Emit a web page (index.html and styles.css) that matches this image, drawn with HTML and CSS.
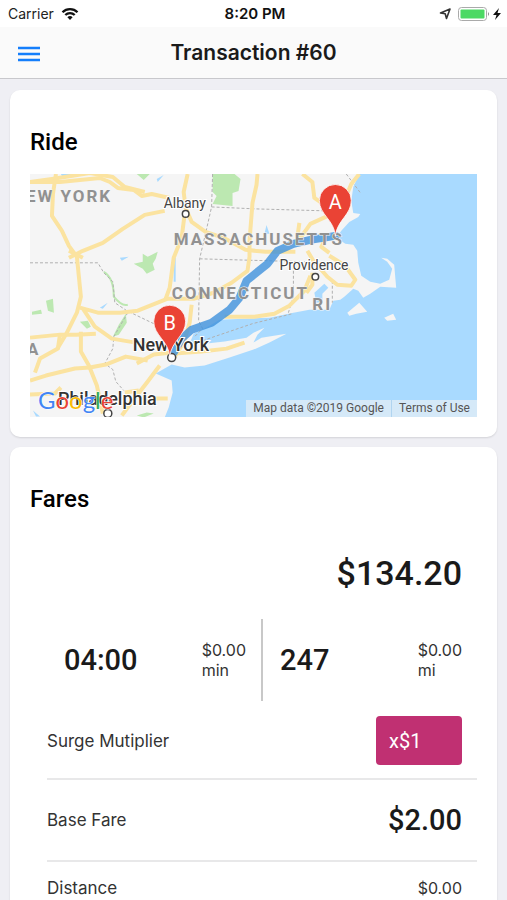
FILE: index.html
```
<!DOCTYPE html>
<html lang="en">
<head>
    <meta charset="UTF-8">
    <meta name="viewport" content="width=device-width, initial-scale=1.0">
    <title>Transaction #60</title>
    <link rel="stylesheet" href="styles.css">
</head>
<body>

<div class="status-bar">
    <div class="status-left">
        <span>Carrier</span>
        <svg width="18" height="14" viewBox="0 0 18 14">
            <path d="M1.500 5.200a10.500 10.500 0 0 1 15 0M4.300 8a6.600 6.600 0 0 1 9.400 0" fill="none" stroke="#111" stroke-width="2.300"/>
            <path d="M9 13L6.400 10.300a3.700 3.700 0 0 1 5.200 0z" fill="#111"/>
        </svg>
    </div>
    <div class="status-time">8:20 PM</div>
    <div class="status-right">
        <svg width="63" height="16" viewBox="0 0 63 16">
            <path d="M1.500 7L11 3 7.500 12.500 6.200 7.800z" fill="none" stroke="#333" stroke-width="1.600" stroke-linejoin="round"/>
            <rect x="19.500" y="1.500" width="28" height="13" rx="3" fill="#fff" stroke="#aaa"/>
            <rect x="21.500" y="3.500" width="24" height="9" rx="1" fill="#4cd964"/>
            <path d="M49 6v4q2-2 0-4z" fill="#888"/>
            <path d="M60 2L54 9h3.500l-1.500 5L62 7h-3.500z" fill="#111"/>
        </svg>
    </div>
</div>

<header>
    <button class="menu-button" aria-label="Menu">
        <svg width="24" height="18" viewBox="0 0 24 18">
            <path d="M1 4h22M1 10h22M1 16h22" stroke="#147efb" stroke-width="2.400"/>
        </svg>
    </button>
    <h1>Transaction #60</h1>
</header>

<main>
    <section class="card">
        <h2>Ride</h2>
        <div class="map">
            <svg class="map-drawing" viewBox="30 173 448 244">
                <rect x="30" y="173" width="448" height="244" fill="#f5f5f5"/>

                <!-- parks -->
                <g fill="#bce8b1">
                    <path d="M213 173h22l6 5-2 12-6 2v13l-10-1-10-1 4-8-4-4z"/>
                    <path d="M137 173h13l-6 6zM134 263l9-2 0-8 5 3 10-5-2 7-3 5 2 6-8 4-4-5z"/>
                    <path d="M46 300l7-2 1 14-6-2zM32 311l9-2 1 4-10 1z"/>
                    <path d="M126 313l1 9-8 12-6 2 6-12zM137 415l10-3 7 1-10 4zM80 321l8-1 3 6-4 2z"/>
                </g>
                <path d="M104 271q10 6 10 25 8 10 14 8" fill="none" stroke="#bce8b1" stroke-width="2"/>

                <!-- water -->
                <g fill="#a9daff">
                    <path d="M360 173L354 186 352 200 354 212 361 213 359 216 350 221 342 230 337 237 346 243 354 244 358 250 359 262 362 275 371 281 381 283 390 279 393 268 388 261 382 257 388 258 395 264 397 287 381 286 371 293 364 297 359 290 354 288 345 296 341 299 334 300 330 309 310 309 294 312 270 317 220 319 210 325 194 333 190 343 207 343 225 341 247 337 254 332 265 327 258 334 254 342 262 337 287 333 270 342 254 349 230 357 205 365 185 367 172 364 156 373 172 380 173 392 169 407 165 417H478V173z"/>
                    <path d="M315 292l10-9 4 4-6 6v8l-6 1zM61 173h15l-4 2H62zM164 174l-6 7-1-3z"/>
                    <path d="M120 257l9-1-7 4zM100 307l8-5-5 6zM174 257h2v24h-2zM267 224l3 9h-5z"/>
                    <path d="M33 410l7 6-4 0z"/>
                </g>
                <path d="M348 312L360 302 368 311 357 313 350 315zM385 317l9-4 3 6-9 1z" fill="#f5f5f5"/>

                <!-- state borders -->
                <g fill="none" stroke="#b0b0b0" stroke-width="1" stroke-dasharray="3 2">
                    <path d="M213 173l-1 33-5 22-7 30-1 62 4 8-8 8M212 206l45 2 72 2M200 258l106 3M294 265v30l-5 17M30 262h68l6 10 9 9 2 21 12 8 27 13 14 6M128 312l-14 24-1 12-8 15 8 6 3 12 8 9M203 340l50-17 40-10M333 280v22M347 173l15 20"/>
                </g>

                <!-- highways -->
                <g class="roads">
                    <path d="M30 181l22-3 38-6 23 4 12 10 20 5"/>
                    <path d="M56 173l-3 20-1 22 10 15 7 15 8 11 4 40-4 16-10 20-9 15"/>
                    <path d="M30 181h30l40-4 10 4 8 6 16 2 8 6 10-2 18 4"/>
                    <path d="M188 173l-4 18 2 16 6 14 14 10 18 6 22 12 20 2h30"/>
                    <path d="M69 257l14-7 20-8 20-14 22-14 20-4M69 250l14 7"/>
                    <path d="M185 213l-3 24-8 20-4 30-4 11"/>
                    <path d="M168 298l-30 12-18 2h-22l-18-5M83 308l12 18 17 12 24 4 18 2M30 337l30-3h16l20-1"/>
                    <path d="M60 334l-2 14-18 10-5 14M30 380l16-5 29-7 15-1 16-3 20-8 22 4"/>
                    <path d="M81 331v20l8 14 8 20 6 28"/>
                    <path d="M168 298h26l20-6 18-10 16-12 2-14 0-16 3-38 4-18 1-11"/>
                    <path d="M192 304l-2 18-6 20-9 14"/>
                    <path d="M225 316l30 0 20-3 15-8 15-15 6-15"/>
                    <path d="M303 173l10 8 2 16 13 9M360 173l-8 10-6 14M333 213l-22 10-10 14M328 234l-6 12 8 6M300 222l-2 14"/>
                    <path d="M308 250l6 10 14 16 10 8 14 1 4-6-10-14-16-10M313 272v12l-6 8"/>
                    <path d="M175 353l27-2 25-3 18-6M137 363l17-9 18-2M160 365l-12 16-14 18-12 16M125 392l14-2"/>
                    <path d="M30 394l25-1 6-6M143 398h25"/>
                </g>

                <!-- route -->
                <path d="M174 352L182 338 192 329 212 322 230 309 240 297 247 280 268 263 278 250 294 243 311 239 336 235" fill="none" stroke="#3f91dc" stroke-opacity=".8" stroke-width="8" stroke-linejoin="round" stroke-linecap="round"/>

                <g class="state">
                    <text x="26" y="201">EW YORK</text>
                    <text x="174" y="244">MASSACHUSETTS</text>
                    <text x="172" y="298">CONNECTICUT</text>
                    <text x="313" y="309">RI</text>
                    <text x="27" y="354">A</text>
                </g>
                <g class="city">
                    <text x="164" y="207">Albany</text>
                    <text x="280" y="269">Providence</text>
                </g>
                <g class="city big">
                    <text x="133" y="350">New York</text>
                    <text x="58" y="405">Philadelphia</text>
                </g>
                <g fill="#fff" stroke="#444" stroke-width="1.500">
                    <circle cx="186" cy="213" r="3.300"/>
                    <circle cx="316" cy="276" r="3.300"/>
                    <circle cx="172" cy="357" r="4"/>
                    <circle cx="108" cy="413" r="4"/>
                </g>

                <!-- markers -->
                <g fill="#ea4335" stroke="#fff" stroke-width=".8">
                    <path d="M336 235C335 219 320 214 320 199.500a16 16 0 0 1 32 0C352 214 338 219 336 235z"/>
                    <path d="M170 356C169 340 154 335 154 320.500a16 16 0 0 1 32 0C186 335 172 340 170 356z"/>
                </g>
                <g class="pin">
                    <text x="336" y="208">A</text>
                    <text x="170" y="329">B</text>
                </g>

                <text class="logo" x="38" y="409"><tspan fill="#4285f4">G</tspan><tspan fill="#ea4335">o</tspan><tspan fill="#fbbc05">o</tspan><tspan fill="#4285f4">g</tspan><tspan fill="#34a853">l</tspan><tspan fill="#ea4335">e</tspan></text>
            </svg>
            <div class="map-legal">
                <span>Map data ©2019 Google</span>
                <a href="#">Terms of Use</a>
            </div>
        </div>
    </section>

    <section class="card">
        <h2>Fares</h2>
        <div class="total">$134.20</div>
        <div class="stats">
            <div class="stat">
                <span class="amount">04:00</span>
                <span class="rate">$0.00<br>min</span>
            </div>
            <div class="stat">
                <span class="amount">247</span>
                <span class="rate">$0.00<br>mi</span>
            </div>
        </div>
        <div class="fare-row surge-row">
            <span>Surge Mutiplier</span>
            <button class="surge">x$1</button>
        </div>
        <div class="fare-row">
            <span>Base Fare</span>
            <span class="amount">$2.00</span>
        </div>
        <div class="fare-row small">
            <span>Distance</span>
            <span class="rate">$0.00</span>
        </div>
    </section>
</main>

</body>
</html>
```
FILE: styles.css
```
* {
    box-sizing: border-box;
}
body {
    font-family: Inter, sans-serif;
    margin: 0;
    background-color: #efeff4;
    color: #333;
    font-size: 16px;
    line-height: 20px;
}
.status-bar {
    display: grid;
    grid-template-columns: 1fr auto 1fr;
    align-items: center;
    height: 27px;
    padding: 0 5px 0 8px;
    background-color: #fff;
    font-size: 14px;
    color: #222;
}
.status-left {
    display: flex;
    align-items: center;
    gap: 7px;
}
.status-time {
    font-size: 15px;
    font-weight: 600;
    color: #111;
}
.status-right {
    display: flex;
    justify-content: flex-end;
}
svg {
    display: block;
}
header {
    display: grid;
    grid-template-columns: 40px 1fr 40px;
    align-items: center;
    height: 52px;
    padding: 0 9px;
    background-color: #fafafa;
    border-bottom: 1px solid #c8c8cc;
}
header h1 {
    margin: 0;
    font-size: 21px;
    font-weight: 600;
    text-align: center;
    color: #1a1a1a;
}
.menu-button {
    padding: 8px;
    border: none;
    background: none;
    cursor: pointer;
}
main {
    padding: 11px 10px;
}
.card {
    margin-bottom: 10px;
    padding: 36px 20px 20px;
    background-color: #fff;
    border-radius: 10px;
    box-shadow: 0 1px 2px rgba(0, 0, 0, 0.12);
}
.card h2 {
    margin: 0;
    font-family: Roboto, sans-serif;
    font-size: 24px;
    font-weight: 500;
    line-height: 32px;
    color: #000;
}
.map {
    position: relative;
    margin-top: 16px;
    font-family: Roboto, sans-serif;
}
.map-drawing {
    width: 100%;
    height: auto;
}
.roads path {
    fill: none;
    stroke: #fbe3a0;
    stroke-width: 4px;
    stroke-linejoin: round;
}
.state text {
    font-size: 17px;
    font-weight: 700;
    letter-spacing: 2px;
    fill: #919191;
    stroke: #f5f5f5;
    stroke-width: 1px;
    paint-order: stroke;
}
.city text {
    font-size: 14px;
    fill: #444;
    stroke: #fff;
    stroke-width: 2px;
    paint-order: stroke;
}
.city.big text {
    font-size: 18px;
    font-weight: 500;
    fill: #333;
}
.pin text {
    font-size: 20px;
    fill: #fff;
    text-anchor: middle;
}
.logo {
    font-family: Lato, sans-serif;
    font-size: 24px;
    stroke: #fff;
    stroke-width: 1px;
    paint-order: stroke;
}
.map-legal {
    position: absolute;
    right: 0;
    bottom: 0;
    display: flex;
    font-size: 12px;
    line-height: 17px;
    background-color: #d5e9f8;
}
.map-legal span,
.map-legal a {
    padding: 0 7px;
    color: #555;
    text-decoration: none;
}
.map-legal a {
    border-left: 1px solid #b0d4f0;
}
.total {
    margin-top: 36px;
    padding-right: 15px;
    text-align: right;
    font-family: Roboto, sans-serif;
    font-size: 34px;
    font-weight: 500;
    line-height: 44px;
    color: #1a1a1a;
}
.amount {
    font-family: Roboto, sans-serif;
    font-size: 29px;
    font-weight: 500;
    line-height: 36px;
    color: #1a1a1a;
}
.stats {
    display: grid;
    grid-template-columns: 233px 1fr;
    margin-top: 24px;
}
.stat {
    display: flex;
    justify-content: space-between;
    align-items: center;
    height: 82px;
    padding: 0 15px 0 17px;
}
.stat:first-child {
    padding-left: 34px;
    border-right: 2px solid #c8c8c8;
}
.rate {
    font-size: 16px;
    line-height: 20px;
}
.fare-row {
    display: flex;
    justify-content: space-between;
    align-items: center;
    margin-left: 17px;
    padding: 22px 15px 22px 0;
    border-bottom: 2px solid #e8e8e9;
    font-size: 17px;
}
.fare-row.surge-row {
    padding-top: 15px;
    padding-bottom: 13px;
}
.fare-row.small {
    padding-top: 16px;
    padding-bottom: 16px;
}
.surge {
    width: 86px;
    height: 49px;
    padding: 0 13px;
    border: none;
    border-radius: 4px;
    background-color: #c03072;
    font-family: Roboto, sans-serif;
    font-size: 20px;
    text-align: left;
    color: #fff;
}
```
